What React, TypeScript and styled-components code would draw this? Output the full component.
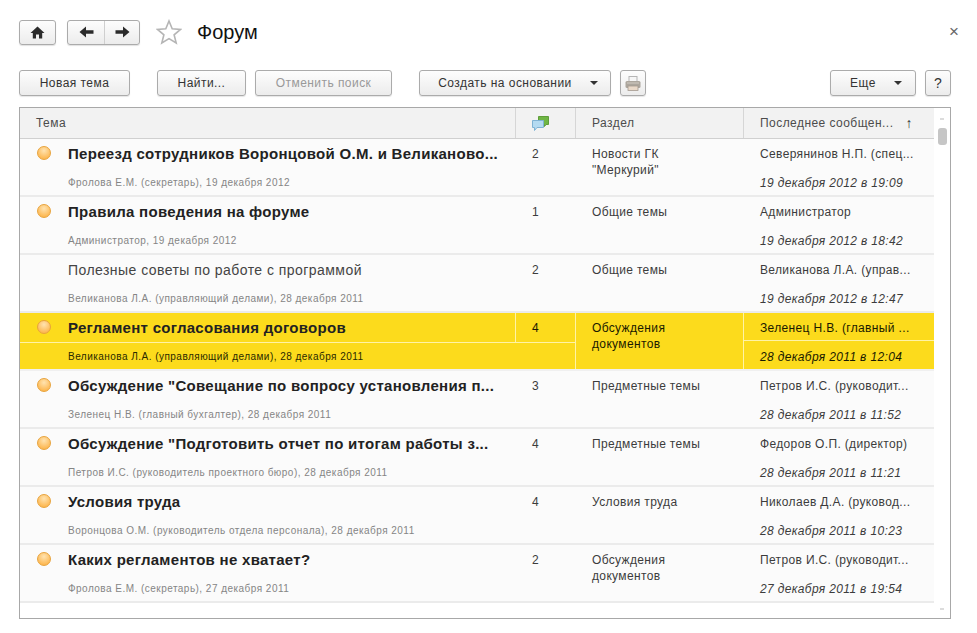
import React from "react";
import styled, { createGlobalStyle } from "styled-components";

const GlobalStyle = createGlobalStyle`
  html, body {
    margin: 0;
    padding: 0;
    background: #fff;
    font-family: "Liberation Sans", Arial, sans-serif;
  }
`;

const Page = styled.div`
  width: 977px;
  height: 633px;
  box-sizing: border-box;
  padding: 19px 26px 0 19px;
  overflow: hidden;
`;

const TitleBar = styled.div`
  display: flex;
  align-items: center;
  height: 26px;
`;

const NavGroup = styled.div`
  display: flex;
  height: 25px;
  margin-right: 11px;
  border: 1px solid #ababab;
  border-radius: 3px;
  box-sizing: border-box;
  background: linear-gradient(#fdfdfd, #ececec);
  box-shadow: 0 1px 1px rgba(0, 0, 0, 0.12);
`;

const NavButton = styled.div<{ $width: number; $divider?: boolean }>`
  display: flex;
  align-items: center;
  justify-content: center;
  width: ${(p) => p.$width}px;
  border-right: ${(p) => (p.$divider ? "1px solid #cfcfcf" : "none")};
`;

const Star = styled.svg`
  display: block;
  margin: 0 15px 0 5px;
`;

const Title = styled.h1`
  flex: 1;
  margin: 0;
  font-size: 20px;
  font-weight: 400;
  color: #111;
`;

const CloseMark = styled.div`
  width: 8px;
  height: 26px;
  margin-right: -6px;
  font-size: 17px;
  line-height: 26px;
  color: #666;
`;

const CommandBar = styled.div`
  display: flex;
  align-items: center;
  height: 26px;
  margin-top: 25px;
`;

const Button = styled.div<{ $width: number; $gap?: number; $disabled?: boolean; $menu?: boolean }>`
  display: flex;
  align-items: center;
  justify-content: center;
  flex: none;
  width: ${(p) => p.$width}px;
  height: 26px;
  margin-right: ${(p) => p.$gap ?? 0}px;
  padding-left: ${(p) => (p.$menu ? 6 : 0)}px;
  box-sizing: border-box;
  border: 1px solid #ababab;
  border-radius: 3px;
  background: linear-gradient(#fdfdfd, #ececec);
  box-shadow: 0 1px 1px rgba(0, 0, 0, 0.1);
  font-size: 12px;
  letter-spacing: 0.45px;
  color: ${(p) => (p.$disabled ? "#999" : "#333")};
`;

const HelpButton = styled(Button)`
  font-size: 14px;
`;

const Caret = styled.span`
  width: 0;
  height: 0;
  margin-left: 18px;
  border-left: 4px solid transparent;
  border-right: 4px solid transparent;
  border-top: 4px solid #333;
`;

const Spacer = styled.div`
  flex: 1;
`;

const Frame = styled.div`
  display: flex;
  height: 512px;
  margin-top: 11px;
  box-sizing: border-box;
  border: 1px solid #a8a8a8;
  background: #fff;
`;

const TableArea = styled.div`
  width: 914px;
  flex: none;
`;

const Columns = "495px 60px 168px 191px";

const HeaderRow = styled.div`
  display: grid;
  grid-template-columns: ${Columns};
  height: 31px;
  box-sizing: border-box;
  background: #f2f2f2;
  border-bottom: 1px solid #d0d0d0;
`;

const HeaderCell = styled.div<{ $divider?: boolean }>`
  display: flex;
  align-items: center;
  padding-left: 16px;
  border-left: ${(p) => (p.$divider ? "1px solid #d6d6d6" : "none")};
  font-size: 12px;
  letter-spacing: 0.45px;
  color: #4c4c4c;
`;

const SortArrow = styled.span`
  margin-left: 12px;
  font-size: 14px;
  color: #333;
`;

const Row = styled.div<{ $selected?: boolean }>`
  display: grid;
  grid-template-columns: ${Columns};
  grid-template-rows: 30px 26px;
  grid-template-areas:
    "topic count section author"
    "meta meta section date";
  height: 58px;
  box-sizing: border-box;
  background: ${(p) => (p.$selected ? "#fcdb1c" : "#fbfbfb")};
  border-bottom: 2px solid ${(p) => (p.$selected ? "#f0f0f0" : "#ebebeb")};
  color: ${(p) => (p.$selected ? "#1a1a00" : "#3c3c3c")};
`;

const separator = "#fff3a6";

const Topic = styled.div<{ $selected?: boolean }>`
  grid-area: topic;
  display: flex;
  align-items: center;
  padding-left: 17px;
  min-width: 0;
  border-bottom: 1px solid ${(p) => (p.$selected ? separator : "transparent")};
`;

const Dot = styled.span<{ $hidden?: boolean }>`
  flex: none;
  width: 14px;
  height: 14px;
  margin: -2px 17px 0 0;
  box-sizing: border-box;
  border-radius: 50%;
  border: 1px solid #e8a33c;
  background: radial-gradient(circle at 50% 30%, #ffe3b0, #fdb954 75%);
  visibility: ${(p) => (p.$hidden ? "hidden" : "visible")};
`;

const TopicText = styled.span<{ $bold?: boolean }>`
  font-size: ${(p) => (p.$bold ? 15 : 14)}px;
  font-weight: ${(p) => (p.$bold ? 700 : 400)};
  letter-spacing: ${(p) => (p.$bold ? 0.29 : 0.45)}px;
  color: ${(p) => (p.$bold ? "#222" : "#444")};
  white-space: nowrap;
`;

const Count = styled.div<{ $selected?: boolean }>`
  grid-area: count;
  display: flex;
  align-items: center;
  padding-left: 16px;
  font-size: 12px;
  border-left: 1px solid ${(p) => (p.$selected ? separator : "transparent")};
  border-bottom: 1px solid ${(p) => (p.$selected ? separator : "transparent")};
`;

const Meta = styled.div<{ $selected?: boolean }>`
  grid-area: meta;
  padding: 8px 0 0 48px;
  font-size: 10px;
  letter-spacing: 0.47px;
  white-space: nowrap;
  color: ${(p) => (p.$selected ? "#2a2a00" : "#858585")};
`;

const Section = styled.div<{ $selected?: boolean }>`
  grid-area: section;
  padding: 7px 0 0 16px;
  font-size: 12px;
  line-height: 16px;
  letter-spacing: 0.35px;
  border-left: 1px solid ${(p) => (p.$selected ? separator : "transparent")};
  white-space: pre-line;
`;

const Author = styled.div<{ $selected?: boolean }>`
  grid-area: author;
  align-self: start;
  height: 28px;
  box-sizing: border-box;
  padding: 7px 0 0 16px;
  font-size: 12px;
  line-height: 16px;
  letter-spacing: 0.35px;
  white-space: nowrap;
  border-left: 1px solid ${(p) => (p.$selected ? separator : "transparent")};
  border-bottom: 1px solid ${(p) => (p.$selected ? separator : "transparent")};
`;

const DateCell = styled.div<{ $selected?: boolean }>`
  grid-area: date;
  margin-top: -2px;
  padding: 8px 0 0 16px;
  font-size: 12px;
  line-height: 16px;
  font-style: italic;
  letter-spacing: 0.35px;
  white-space: nowrap;
  border-left: 1px solid ${(p) => (p.$selected ? separator : "transparent")};
`;

const Scrollbar = styled.div`
  position: relative;
  flex: 1;
  background: #fff;
`;

const ScrollThumb = styled.div`
  position: absolute;
  top: 20px;
  left: 4px;
  width: 9px;
  height: 17px;
  border-radius: 3px;
  background: #c6c6c6;
`;

const ScrollTick = styled.div<{ $bottom?: boolean }>`
  position: absolute;
  left: 6px;
  ${(p) => (p.$bottom ? "bottom: 8px;" : "top: 10px;")}
  width: 4px;
  height: 2px;
  background: #dcdcdc;
`;

type ForumTopic = {
  title: string;
  bold: boolean;
  meta: string;
  count: number;
  section: string;
  author: string;
  date: string;
  selected?: boolean;
};

const topics: ForumTopic[] = [
  {
    title: "Переезд сотрудников Воронцовой О.М. и Великаново...",
    bold: true,
    meta: "Фролова Е.М. (секретарь), 19 декабря 2012",
    count: 2,
    section: 'Новости ГК\n"Меркурий"',
    author: "Северянинов Н.П. (спец...",
    date: "19 декабря 2012 в 19:09",
  },
  {
    title: "Правила поведения на форуме",
    bold: true,
    meta: "Администратор, 19 декабря 2012",
    count: 1,
    section: "Общие темы",
    author: "Администратор",
    date: "19 декабря 2012 в 18:42",
  },
  {
    title: "Полезные советы по работе с программой",
    bold: false,
    meta: "Великанова Л.А. (управляющий делами), 28 декабря 2011",
    count: 2,
    section: "Общие темы",
    author: "Великанова Л.А. (управ...",
    date: "19 декабря 2012 в 12:47",
  },
  {
    title: "Регламент согласования договоров",
    bold: true,
    meta: "Великанова Л.А. (управляющий делами), 28 декабря 2011",
    count: 4,
    section: "Обсуждения\nдокументов",
    author: "Зеленец Н.В. (главный ...",
    date: "28 декабря 2011 в 12:04",
    selected: true,
  },
  {
    title: 'Обсуждение "Совещание по вопросу установления п...',
    bold: true,
    meta: "Зеленец Н.В. (главный бухгалтер), 28 декабря 2011",
    count: 3,
    section: "Предметные темы",
    author: "Петров И.С. (руководит...",
    date: "28 декабря 2011 в 11:52",
  },
  {
    title: 'Обсуждение "Подготовить отчет по итогам работы з...',
    bold: true,
    meta: "Петров И.С. (руководитель проектного бюро), 28 декабря 2011",
    count: 4,
    section: "Предметные темы",
    author: "Федоров О.П. (директор)",
    date: "28 декабря 2011 в 11:21",
  },
  {
    title: "Условия труда",
    bold: true,
    meta: "Воронцова О.М. (руководитель отдела персонала), 28 декабря 2011",
    count: 4,
    section: "Условия труда",
    author: "Николаев Д.А. (руковод...",
    date: "28 декабря 2011 в 10:23",
  },
  {
    title: "Каких регламентов не хватает?",
    bold: true,
    meta: "Фролова Е.М. (секретарь), 27 декабря 2011",
    count: 2,
    section: "Обсуждения\nдокументов",
    author: "Петров И.С. (руководит...",
    date: "27 декабря 2011 в 19:54",
  },
];

function HomeIcon() {
  return (
    <svg width="15" height="13" viewBox="0 0 15 13">
      <path d="M7.5 0.5 L14.5 7 H12.2 V12.5 H9 V8.5 H6 V12.5 H2.8 V7 H0.5 Z" fill="#2b2b2b" />
    </svg>
  );
}

function ArrowIcon({ flip }: { flip?: boolean }) {
  return (
    <svg width="15" height="12" viewBox="0 0 15 12" transform={flip ? "scale(-1 1)" : undefined}>
      <path d="M0.5 6 L7 0.5 V4.3 H14.5 V7.7 H7 V11.5 Z" fill="#2b2b2b" />
    </svg>
  );
}

function PrinterIcon() {
  return (
    <svg width="16" height="15" viewBox="0 0 16 15">
      <rect x="4" y="0.5" width="8" height="5" fill="#f6f6f6" stroke="#b5b5b5" />
      <rect x="0.5" y="5" width="15" height="7" rx="1.5" fill="#aca69d" />
      <rect x="2" y="6.5" width="12" height="1" fill="#d2ccc3" />
      <rect x="3" y="10" width="10" height="4.5" fill="#e9d9c9" stroke="#a39a90" strokeWidth="0.8" />
    </svg>
  );
}

function CommentsIcon() {
  return (
    <svg width="17" height="15" viewBox="0 0 17 15">
      <path d="M6.5 0.5 H16.5 V8.5 H14 L12.5 10.5 V8.5 H6.5 Z" fill="#6fb544" stroke="#5f9e3a" />
      <path d="M0.5 4.5 H11.5 V11.5 H5 L2.5 14.5 V11.5 H0.5 Z" fill="#b4daf1" stroke="#7fb2d4" />
    </svg>
  );
}

function App() {
  return (
    <Page>
      <GlobalStyle />
      <TitleBar>
        <NavGroup>
          <NavButton $width={35}>
            <HomeIcon />
          </NavButton>
        </NavGroup>
        <NavGroup>
          <NavButton $width={36} $divider>
            <ArrowIcon />
          </NavButton>
          <NavButton $width={34}>
            <ArrowIcon flip />
          </NavButton>
        </NavGroup>
        <Star width="26" height="26" viewBox="0 0 26 26">
          <path
            d="M13 2 L16.2 9.8 L24.5 10.4 L18.1 15.8 L20.2 24 L13 19.6 L5.8 24 L7.9 15.8 L1.5 10.4 L9.8 9.8 Z"
            fill="#fff"
            stroke="#b5b5b5"
            strokeWidth="1.6"
          />
        </Star>
        <Title>Форум</Title>
        <CloseMark>×</CloseMark>
      </TitleBar>
      <CommandBar>
        <Button $width={111} $gap={27}>Новая тема</Button>
        <Button $width={89} $gap={9}>Найти...</Button>
        <Button $width={137} $gap={27} $disabled>Отменить поиск</Button>
        <Button $width={192} $gap={9} $menu>
          Создать на основании
          <Caret />
        </Button>
        <Button $width={26}>
          <PrinterIcon />
        </Button>
        <Spacer />
        <Button $width={86} $gap={9} $menu>
          Еще
          <Caret />
        </Button>
        <HelpButton $width={26}>?</HelpButton>
      </CommandBar>
      <Frame>
        <TableArea>
          <HeaderRow>
            <HeaderCell>Тема</HeaderCell>
            <HeaderCell $divider>
              <CommentsIcon />
            </HeaderCell>
            <HeaderCell $divider>Раздел</HeaderCell>
            <HeaderCell $divider>
              Последнее сообщен...
              <SortArrow>↑</SortArrow>
            </HeaderCell>
          </HeaderRow>
          {topics.map((t) => (
            <Row key={t.title} $selected={t.selected}>
              <Topic $selected={t.selected}>
                <Dot $hidden={!t.bold} />
                <TopicText $bold={t.bold}>{t.title}</TopicText>
              </Topic>
              <Count $selected={t.selected}>{t.count}</Count>
              <Meta $selected={t.selected}>{t.meta}</Meta>
              <Section $selected={t.selected}>{t.section}</Section>
              <Author $selected={t.selected}>{t.author}</Author>
              <DateCell $selected={t.selected}>{t.date}</DateCell>
            </Row>
          ))}
        </TableArea>
        <Scrollbar>
          <ScrollTick />
          <ScrollThumb />
          <ScrollTick $bottom />
        </Scrollbar>
      </Frame>
    </Page>
  );
}

export default App;
